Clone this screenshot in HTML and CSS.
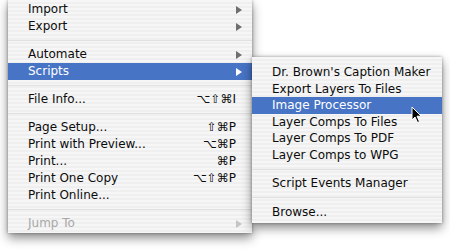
FILE: index.html
```html
<!DOCTYPE html>
<html>
  <head>
    <title>Scripts menu</title>
    <link rel="stylesheet" href="styles.css">
  </head>
<body>
  <div class="stage">

    <div class="menu mainmenu">
      <div class="item"><span class="label">Import</span><span class="arrow"></span></div>
      <div class="item"><span class="label">Export</span><span class="arrow"></span></div>
      <div class="sep"></div>
      <div class="item"><span class="label">Automate</span><span class="arrow"></span></div>
      <div class="item selected"><span class="label">Scripts</span><span class="arrow"></span></div>
      <div class="sep"></div>
      <div class="item"><span class="label">File Info...</span><span class="keys">⌥⇧⌘I</span></div>
      <div class="sep"></div>
      <div class="item"><span class="label">Page Setup...</span><span class="keys">⇧⌘P</span></div>
      <div class="item"><span class="label">Print with Preview...</span><span class="keys">⌥⌘P</span></div>
      <div class="item"><span class="label">Print...</span><span class="keys">⌘P</span></div>
      <div class="item"><span class="label">Print One Copy</span><span class="keys">⌥⇧⌘P</span></div>
      <div class="item"><span class="label">Print Online...</span></div>
      <div class="sep"></div>
      <div class="item disabled"><span class="label">Jump To</span><span class="arrow"></span></div>
    </div>

    <div class="menu submenu">
      <div class="item"><span class="label">Dr. Brown's Caption Maker</span></div>
      <div class="item"><span class="label">Export Layers To Files</span></div>
      <div class="item selected"><span class="label">Image Processor</span></div>
      <div class="item"><span class="label">Layer Comps To Files</span></div>
      <div class="item"><span class="label">Layer Comps To PDF</span></div>
      <div class="item"><span class="label">Layer Comps to WPG</span></div>
      <div class="sep"></div>
      <div class="item"><span class="label">Script Events Manager</span></div>
      <div class="sep"></div>
      <div class="item"><span class="label">Browse...</span></div>
    </div>

    <svg class="cursor" width="12" height="18" viewBox="0 0 12 18">
      <path d="M1 1 L1 14 L4 11 L6.5 16.5 L8.5 15.6 L6 10.2 L10.2 10.2 Z" fill="#000" stroke="#fff" stroke-width="1"/>
    </svg>

  </div>
</body>
</html>
```

FILE: styles.css
```css
body{
  margin: 0;
  background-color: white;
  font-family: "DejaVu Sans", Verdana, sans-serif;
  font-size: 12px;
  color: #0c0c0c;
}
.stage{
  position: relative;
  width: 450px;
  height: 250px;
  overflow: hidden;
}
.menu{
  background-color: #f4f4f4;
  background-image: repeating-linear-gradient(to bottom, #f6f6f6 0px, #f6f6f6 2px, #efefef 2px, #efefef 4px);
  box-shadow: 0 5px 10px rgba(0, 0, 0, 0.45), 0 0 3px rgba(0, 0, 0, 0.35);
}
.mainmenu{
  margin-left: 8px;
  width: 244px;
  padding: 1px 0 1px 0;
}
.submenu{
  position: absolute;
  left: 252px;
  top: 57px;
  width: 190px;
  padding: 7px 0 3px 0;
}
.item{
  display: flex;
  align-items: center;
  height: 17px;
  padding-left: 20px;
  padding-right: 10px;
  line-height: 17px;
}
.submenu .item{
  height: 16.5px;
  line-height: 16.5px;
}
.label{
  flex: 1;
  white-space: nowrap;
}
.keys{
  padding-right: 6px;
}
.arrow{
  width: 0;
  height: 0;
  border-top: 4px solid transparent;
  border-bottom: 4px solid transparent;
  border-left: 6px solid #6e6e6e;
}
.selected{
  background-color: #4874c6;
  color: white;
}
.selected .arrow{
  border-left-color: white;
}
.disabled{
  color: #a8a8a8;
}
.disabled .arrow{
  border-left-color: #c4c4c4;
}
.sep{
  height: 11px;
  display: flex;
  align-items: center;
}
.sep::after{
  content: "";
  flex: 1;
  height: 1px;
  background-color: #e0e0e0;
}
.submenu .sep{
  height: 12px;
}
.cursor{
  position: absolute;
  left: 411px;
  top: 106px;
}
```
